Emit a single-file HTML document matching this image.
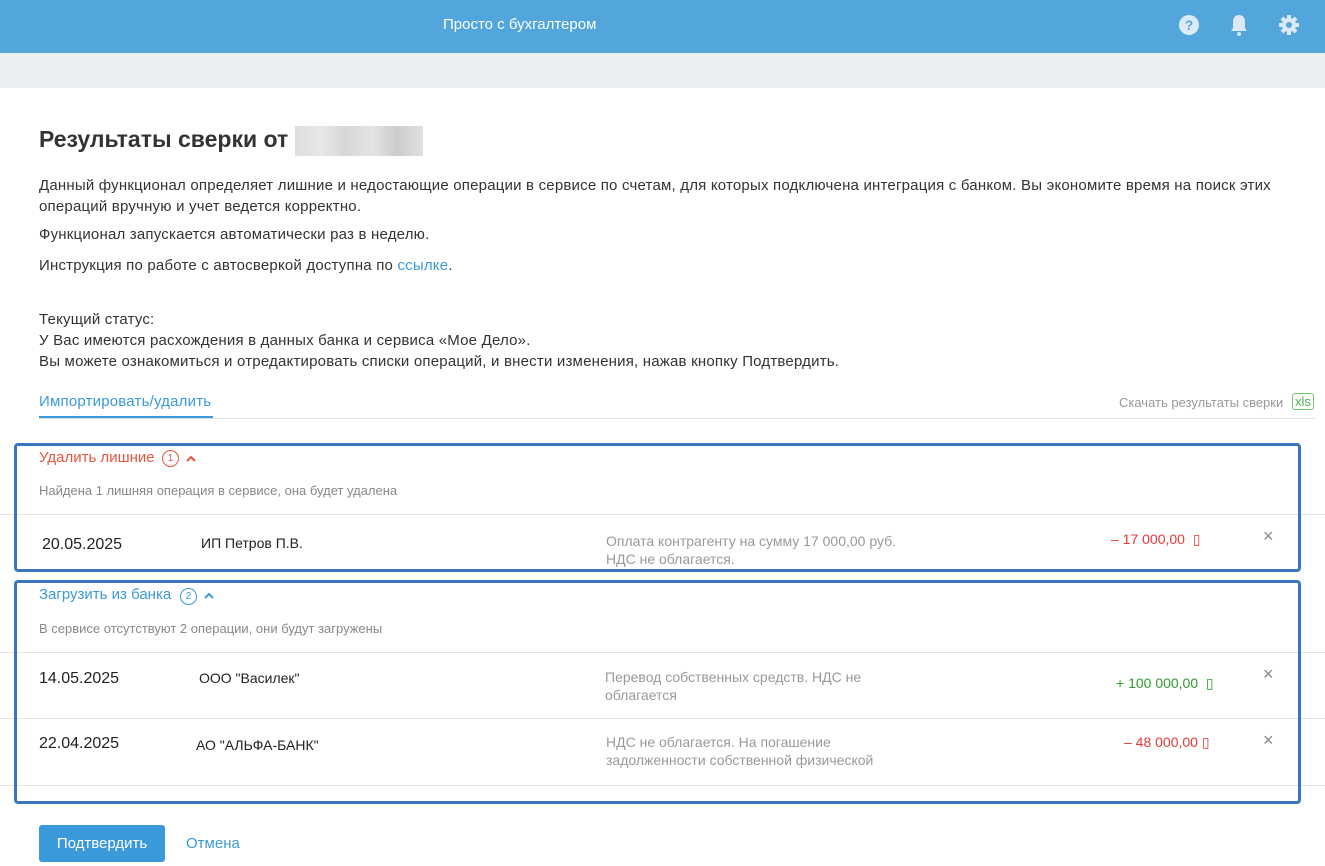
<!DOCTYPE html>
<html><head><meta charset="utf-8"><style>
body{margin:0;width:1325px;height:866px;position:relative;font-family:"Liberation Sans",sans-serif;background:#fff;color:#333;overflow:hidden}
.a{position:absolute;white-space:nowrap}
.hdr{position:absolute;left:0;top:0;width:1325px;height:53px;background:#52a6dc}
.band{position:absolute;left:0;top:53px;width:1325px;height:35px;background:#ebeff2}
.p{font-size:15px;letter-spacing:0.2px;color:#333}
.line{position:absolute;left:0;width:1325px;height:1px;background:#e4e4e4}
.box{position:absolute;border:3px solid #3a76bf;border-radius:4px;box-sizing:border-box}
.gray{color:#999;font-size:14px}
.x{color:#888;font-size:18px}
</style></head><body>
<div class="hdr"></div>
<div class="a" style="left:443px;top:16px;color:#fff;font-size:15px">Просто с бухгалтером</div>
<svg class="a" style="left:1178px;top:14px" width="22" height="22" viewBox="0 0 22 22"><circle cx="11" cy="11" r="10" fill="#dbeaf6"/><text x="11" y="16" text-anchor="middle" font-size="14" font-weight="bold" fill="#52a6dc" font-family="Liberation Sans">?</text></svg>
<svg class="a" style="left:1229px;top:13px" width="20" height="24" viewBox="0 0 20 24"><path d="M10 2c-4 0-6 3-6 7v6l-2 3h16l-2-3V9c0-4-2-7-6-7z" fill="#dbeaf6"/><circle cx="10" cy="21" r="2" fill="#dbeaf6"/></svg>
<svg class="a" style="left:1278px;top:14px" width="22" height="22" viewBox="0 0 22 22"><g fill="#dbeaf6"><circle cx="11" cy="11" r="7"/><rect x="9" y="1" width="4" height="20"/><rect x="1" y="9" width="20" height="4"/><rect x="9" y="1" width="4" height="20" transform="rotate(45 11 11)"/><rect x="9" y="1" width="4" height="20" transform="rotate(-45 11 11)"/></g><circle cx="11" cy="11" r="3" fill="#52a6dc"/></svg>
<div class="band"></div>
<div class="a" style="left:39px;top:126px;font-size:23px;font-weight:bold;color:#333">Результаты сверки от</div>
<div class="a" style="left:295px;top:126px;width:128px;height:30px;background:linear-gradient(90deg,#ddd,#e8e8e8,#d6d6d6,#e4e4e4,#ccc,#e0e0e0)"></div>
<div class="a p" style="left:39px;top:175px;line-height:21px">Данный функционал определяет лишние и недостающие операции в сервисе по счетам, для которых подключена интеграция с банком. Вы экономите время на поиск этих<br>операций вручную и учет ведется корректно.</div>
<div class="a p" style="left:39px;top:226px">Функционал запускается автоматически раз в неделю.</div>
<div class="a p" style="left:39px;top:257px">Инструкция по работе с автосверкой доступна по <span style="color:#3a9ad9">ссылке</span>.</div>
<div class="a p" style="left:39px;top:309px;line-height:21px">Текущий статус:<br>У Вас имеются расхождения в данных банка и сервиса «Мое Дело».<br>Вы можете ознакомиться и отредактировать списки операций, и внести изменения, нажав кнопку Подтвердить.</div>
<div class="a" style="left:39px;top:393px;font-size:15px;letter-spacing:0.2px;color:#3a9ad9">Импортировать/удалить</div>
<div class="a" style="left:39px;top:416px;width:174px;height:2px;background:#3a9ad9"></div>
<div class="line" style="top:418px;left:39px;width:1277px"></div>
<div class="a" style="left:1119px;top:395px;font-size:13px;color:#999">Скачать результаты сверки</div>
<div class="a" style="left:1292px;top:393px;font-size:13px;color:#4caf50;border:1px solid #6cc36c;border-radius:3px;padding:0 2px">xls</div>

<div class="line" style="top:514px"></div>
<div class="line" style="top:652px"></div>
<div class="line" style="top:718px"></div>
<div class="line" style="top:785px"></div>

<div class="box" style="left:14px;top:443px;width:1287px;height:129px"></div>
<div class="a" style="left:39px;top:449px;font-size:15px;color:#e8553e">Удалить лишние</div>
<div class="a" style="left:162px;top:450px;width:15px;height:15px;border:1px solid #e8553e;border-radius:50%;font-size:10px;color:#e8553e;text-align:center;line-height:15px">1</div>
<svg class="a" style="left:185px;top:454px" width="12" height="10"><path d="M2 7l4-4 4 4" stroke="#e8553e" stroke-width="2" fill="none"/></svg>
<div class="a" style="left:39px;top:483px;font-size:13px;color:#888">Найдена 1 лишняя операция в сервисе, она будет удалена</div>
<div class="a" style="left:42px;top:536px;font-size:16px;color:#222">20.05.2025</div>
<div class="a" style="left:201px;top:535px;font-size:14px;color:#222">ИП Петров П.В.</div>
<div class="a gray" style="left:606px;top:532px;line-height:18px">Оплата контрагенту на сумму 17 000,00 руб.<br>НДС не облагается.</div>
<div class="a" style="left:1111px;top:531px;font-size:14px;color:#e53935">– 17 000,00 &nbsp;▯</div>
<div class="a x" style="left:1263px;top:526px">×</div>

<div class="box" style="left:14px;top:580px;width:1287px;height:224px"></div>
<div class="a" style="left:39px;top:586px;font-size:15px;color:#3a9ad9">Загрузить из банка</div>
<div class="a" style="left:180px;top:588px;width:15px;height:15px;border:1px solid #3a9ad9;border-radius:50%;font-size:10px;color:#3a9ad9;text-align:center;line-height:15px">2</div>
<svg class="a" style="left:203px;top:591px" width="12" height="10"><path d="M2 7l4-4 4 4" stroke="#3a9ad9" stroke-width="2" fill="none"/></svg>
<div class="a" style="left:39px;top:621px;font-size:13px;color:#888">В сервисе отсутствуют 2 операции, они будут загружены</div>
<div class="a" style="left:39px;top:670px;font-size:16px;color:#222">14.05.2025</div>
<div class="a" style="left:199px;top:670px;font-size:14px;color:#222">ООО "Василек"</div>
<div class="a gray" style="left:605px;top:668px;line-height:18px">Перевод собственных средств. НДС не<br>облагается</div>
<div class="a" style="left:1116px;top:675px;font-size:14px;color:#2e9a2e">+ 100 000,00 &nbsp;▯</div>
<div class="a x" style="left:1263px;top:664px">×</div>
<div class="a" style="left:39px;top:735px;font-size:16px;color:#222">22.04.2025</div>
<div class="a" style="left:196px;top:737px;font-size:14px;color:#222">АО "АЛЬФА-БАНК"</div>
<div class="a gray" style="left:606px;top:733px;line-height:18px">НДС не облагается. На погашение<br>задолженности собственной физической</div>
<div class="a" style="left:1124px;top:734px;font-size:14px;color:#e53935">– 48 000,00 ▯</div>
<div class="a x" style="left:1263px;top:730px">×</div>

<div class="a" style="left:39px;top:825px;width:126px;height:37px;background:#3a9ad9;border-radius:3px;color:#fff;font-size:15px;text-align:center;line-height:37px">Подтвердить</div>
<div class="a" style="left:186px;top:835px;font-size:15px;color:#3a9ad9">Отмена</div>
</body></html>
